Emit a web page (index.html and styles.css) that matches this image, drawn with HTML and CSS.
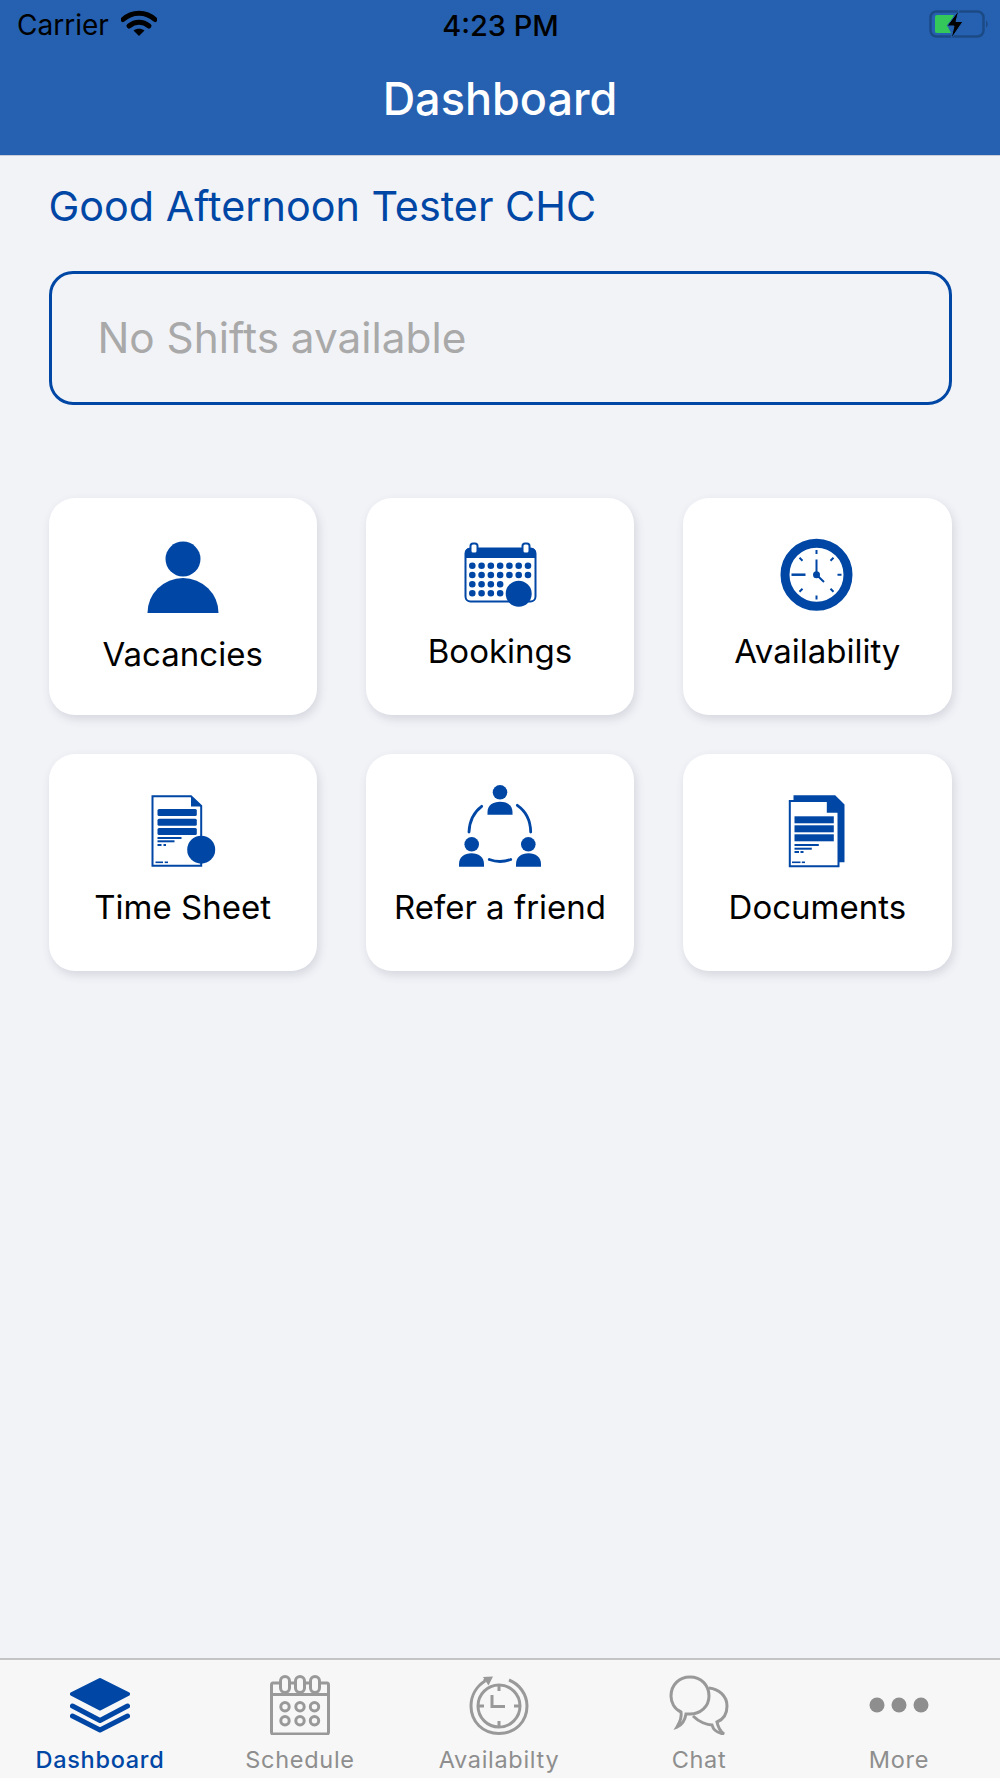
FILE: index.html
```html
<!DOCTYPE html>
<html lang="en">
<head>
  <meta charset="UTF-8" />
  <meta name="viewport" content="width=device-width, initial-scale=1.0"/>
  <title>Dashboard</title>
  <link rel="stylesheet" href="styles.css">
</head>
<body>
  <header class="topbar">
    <div class="status">
      <div class="status-left">
        <span class="carrier">Carrier</span>
        <svg class="wifi" width="36" height="28" viewBox="0 0 36 28">
          <path d="M2 10.500C11 2 25 2 34 10.500" fill="none" stroke="#000" stroke-width="5" stroke-linecap="round"/>
          <path d="M8 17C14 12 22 12 28 17" fill="none" stroke="#000" stroke-width="5" stroke-linecap="round"/>
          <path d="M12.500 21.500C15.500 19 20.500 19 23.500 21.500L18 27Z"/>
        </svg>
      </div>
      <span class="time">4:23 PM</span>
      <div class="status-right">
        <svg width="60" height="30" viewBox="0 0 60 30">
          <rect x="1.500" y="2.500" width="53" height="25" rx="6" fill="none" stroke="#1c4a85" stroke-width="2.500"/>
          <path d="M57 11.500C59 12.500 59.500 17.500 57 18.500Z" fill="#1c4a85"/>
          <path d="M6 8C6 7 6.500 6 8 6H25L19 18L22 24H8C6.500 24 6 23 6 22Z" fill="#34c759"/>
          <path d="M30 1L18 17H25L22 30L34 12.500H27Z" stroke="#2561b0" stroke-width="1"/>
        </svg>
      </div>
    </div>
    <h1 class="title">Dashboard</h1>
  </header>

  <main class="content">
    <p class="greeting">Good Afternoon Tester CHC</p>
    <div class="shifts">No Shifts available</div>

    <div class="grid">
      <div class="card">
        <svg class="card-icon" width="90" height="88" viewBox="0 0 90 88">
          <circle cx="45" cy="31" r="17.500"/>
          <path d="M9.500 85A35.500 35 0 0 1 80.500 85Z"/>
        </svg>
        <span class="card-label card-label-low">Vacancies</span>
      </div>

      <div class="card">
        <svg class="card-icon" width="90" height="88" viewBox="0 0 90 88">
          <rect x="10.500" y="20.500" width="70" height="53" rx="5" fill="#fff" stroke="#0047a5" stroke-width="2"/>
          <path d="M10 30V25C10 22 12 20 15 20H76C79 20 81 22 81 25V30Z"/>
          <rect x="15.500" y="15.500" width="7" height="10" rx="2.500" fill="#fff" stroke="#0047a5" stroke-width="2"/>
          <rect x="67.500" y="15.500" width="7" height="10" rx="2.500" fill="#fff" stroke="#0047a5" stroke-width="2"/>
          <g fill="none" stroke="#0047a5" stroke-width="6.600" stroke-linecap="round" stroke-dasharray="0 9.280">
            <path d="M17.300 37.700H74"/>
            <path d="M17.300 47H74"/>
            <path d="M17.300 56.300H46"/>
            <path d="M17.300 65.300H46"/>
          </g>
          <circle cx="63.700" cy="65.700" r="13"/>
        </svg>
        <span class="card-label">Bookings</span>
      </div>

      <div class="card">
        <svg class="card-icon" width="90" height="88" viewBox="0 0 90 88">
          <circle cx="44.500" cy="46.700" r="31.500" fill="#fff" stroke="#0047a5" stroke-width="9"/>
          <g fill="none" stroke="#0047a5" stroke-width="2">
            <path d="M44.500 22V26M44.500 67.500V71.500M65.500 46.700H69.500"/>
            <path d="M19.500 46.700H33.500" stroke-width="2.500"/>
            <path d="M27.500 29.700L30.500 32.700M61.500 29.700L58.500 32.700M27.500 63.700L30.500 60.700M61.500 63.700L58.500 60.700"/>
            <path d="M44.500 46.700V31.500M44.500 46.700L52 54"/>
          </g>
          <circle cx="44.500" cy="46.700" r="3.500"/>
        </svg>
        <span class="card-label">Availability</span>
      </div>

      <div class="card">
        <svg class="card-icon" width="90" height="88" viewBox="0 0 90 88">
          <path d="M14.500 12.300H53L63.200 22V81.700H14.500Z" fill="#fff" stroke="#0047a5" stroke-width="2"/>
          <path d="M53 12.300L64.200 22.500H53Z"/>
          <rect x="19.500" y="25" width="39.300" height="7" rx="1.500"/>
          <rect x="19.500" y="34.700" width="39.300" height="7" rx="1.500"/>
          <rect x="19.500" y="44" width="39.300" height="7" rx="1.500"/>
          <rect x="19.500" y="53" width="24" height="2"/>
          <rect x="19.500" y="56.300" width="17" height="2"/>
          <rect x="19.500" y="60" width="4" height="2"/>
          <rect x="25.500" y="60" width="2.500" height="2"/>
          <rect x="17.500" y="77.500" width="7.500" height="1.600"/>
          <rect x="26.700" y="77.500" width="3.300" height="1.600"/>
          <circle cx="63.200" cy="65.700" r="14"/>
        </svg>
        <span class="card-label">Time Sheet</span>
      </div>

      <div class="card">
        <svg class="card-icon" width="90" height="88" viewBox="0 0 90 88">
          <circle cx="45" cy="8.300" r="7.300"/>
          <path d="M32.500 30.700V28C32.500 21 38 17.700 45 17.700S57.500 21 57.500 28V30.700Z"/>
          <circle cx="16.700" cy="60.300" r="7.300"/>
          <path d="M4 82.700V80C4 73 9.500 69.300 16.500 69.300S29 73 29 80V82.700Z"/>
          <circle cx="73.300" cy="60.300" r="7.300"/>
          <path d="M61 82.700V80C61 73 66.500 69.300 73.500 69.300S86 73 86 80V82.700Z"/>
          <g fill="none" stroke="#0047a5" stroke-width="2.800" stroke-linecap="round">
            <path d="M26.700 22.300C19 28 14.500 37 14 48"/>
            <path d="M62.300 21.300C70.500 27 75.500 37 75.700 48"/>
            <path d="M34.300 75.500C41 78 49 78 55.700 75.500"/>
          </g>
        </svg>
        <span class="card-label">Refer a friend</span>
      </div>

      <div class="card">
        <svg class="card-icon" width="90" height="88" viewBox="0 0 90 88">
          <path d="M21.500 11.300H63.200L72.500 20.500V78.300H21.500Z"/>
          <path d="M17.800 17H55.800L66.500 27.700V82.300H17.800Z" fill="#fff" stroke="#0047a5" stroke-width="2"/>
          <path d="M54.800 16H60L67.500 23V28.700H54.800Z"/>
          <rect x="22.500" y="32.300" width="39.300" height="7"/>
          <rect x="22.500" y="41.300" width="39.300" height="7"/>
          <rect x="22.500" y="50.300" width="39.300" height="7"/>
          <rect x="22.500" y="60" width="24.300" height="2"/>
          <rect x="22.500" y="63.700" width="17.300" height="2"/>
          <rect x="22.500" y="67" width="4.500" height="2"/>
          <rect x="28.500" y="67" width="3" height="2"/>
          <rect x="20" y="77.500" width="8.500" height="1.600"/>
          <rect x="29.800" y="77.500" width="3.200" height="1.600"/>
        </svg>
        <span class="card-label">Documents</span>
      </div>
    </div>
  </main>

  <nav class="tabbar">
    <div class="tab tab-active">
      <svg width="60" height="60" viewBox="0 0 60 60">
        <path d="M30 5L58 19L30 33.500L2 19Z" fill="#0047a5" stroke="#0047a5" stroke-width="4" stroke-linejoin="round"/>
        <path d="M2.500 31L30 45.500L57.500 31" fill="none" stroke="#0047a5" stroke-width="5" stroke-linecap="round" stroke-linejoin="round"/>
        <path d="M2.500 41L30 55L57.500 41" fill="none" stroke="#0047a5" stroke-width="5" stroke-linecap="round" stroke-linejoin="round"/>
      </svg>
      <span>Dashboard</span>
    </div>

    <div class="tab">
      <svg width="60" height="60" viewBox="0 0 60 60" fill="none" stroke="#999" stroke-width="3">
        <path d="M10 8H3C2 8 1.500 9 1.500 10V57C1.500 58.500 2 59 3 59H57C58 59 58.500 58.500 58.500 57V10C58.500 9 58 8 57 8H50"/>
        <path d="M1.500 19.500H58.500"/>
        <path d="M20 8H25M35 8H40"/>
        <rect x="10.500" y="1.500" width="9" height="16" rx="4.500"/>
        <rect x="25.500" y="1.500" width="9" height="16" rx="4.500"/>
        <rect x="40.500" y="1.500" width="9" height="16" rx="4.500"/>
        <circle cx="15" cy="31.700" r="4.200"/>
        <circle cx="30" cy="31.700" r="4.200"/>
        <circle cx="44.500" cy="31.700" r="4.200"/>
        <circle cx="15" cy="45.700" r="4.200"/>
        <circle cx="30" cy="45.700" r="4.200"/>
        <circle cx="44.500" cy="45.700" r="4.200"/>
      </svg>
      <span>Schedule</span>
    </div>

    <div class="tab tab-shift">
      <svg width="60" height="60" viewBox="0 0 60 60" fill="none" stroke="#999" stroke-width="3">
        <path d="M40 5C50 9 58 19 58 31C58 47 46 58.500 30 58.500S2 47 2 31C2 20 8 11 16 6"/>
        <path d="M15 6L19 3" stroke-width="3"/>
        <path d="M14 2L24 1.500L19.500 10.500Z" fill="#999" stroke="none"/>
        <circle cx="30" cy="31" r="21"/>
        <path d="M30 10V16M30 46V52M9 31H15M45 31H51"/>
        <path d="M23 20V31.500H36" stroke-width="3"/>
      </svg>
      <span>Availabilty</span>
    </div>

    <div class="tab tab-shift">
      <svg width="60" height="60" viewBox="0 0 60 60" fill="none" stroke="#999" stroke-width="3">
        <path d="M12 37C5 34 2 27 2 21C2 10 10 2 21 2S40 10 40 21S31 39 21 39C19 39 18 39 17 39C16 45 13 50 8 52C11 47 13 42 12 37Z"/>
        <path d="M40 13C50 14 58 21 58 31C58 40 53 45 48 47C49 52 51 56 55 59C48 58 44 54 43 50C38 50 30 47 24 41"/>
      </svg>
      <span>Chat</span>
    </div>

    <div class="tab tab-shift">
      <svg width="60" height="60" viewBox="0 0 60 60" fill="#8e8e8e">
        <circle cx="8" cy="30" r="7.500"/>
        <circle cx="30" cy="30" r="7.500"/>
        <circle cx="52" cy="30" r="7.500"/>
      </svg>
      <span>More</span>
    </div>
  </nav>
</body>
</html>
```

FILE: styles.css
```css
body {
  margin: 0;
  height: 100vh;
  display: flex;
  flex-direction: column;
  font-family: Inter, 'Noto Sans', sans-serif;
  background: #f2f3f7;
  overflow: hidden;
}

svg {
  display: block;
}

.topbar {
  height: 155px;
  flex-shrink: 0;
  background: #2561b0;
  border-bottom: 1px solid #c9ced8;
}

.status {
  height: 50px;
  padding: 0 11px 0 17px;
  display: grid;
  grid-template-columns: 1fr auto 1fr;
  align-items: center;
  color: #000;
  font-size: 28px;
}

.status-left {
  display: flex;
  align-items: center;
  gap: 12px;
}

.status-left .wifi {
  fill: #000;
  margin-top: -4px;
}

.status-right {
  display: flex;
  justify-content: flex-end;
}

.status-right svg {
  fill: #000;
  margin-top: -2px;
}

.time {
  margin-right: 5px;
  font-size: 29px;
  font-weight: 500;
}

.title {
  margin: 0;
  height: 96px;
  line-height: 98px;
  text-align: center;
  color: #fff;
  font-size: 45px;
  font-weight: 500;
}

.content {
  flex: 1;
  padding: 0 48.5px;
}

.greeting {
  margin: 0;
  padding-top: 26px;
  line-height: 48px;
  color: #0047a5;
  font-size: 41.3px;
}

.shifts {
  margin-top: 41px;
  height: 128px;
  line-height: 128px;
  padding-left: 46px;
  border: 3px solid #0047a5;
  border-radius: 24px;
  color: #a9a9a9;
  font-size: 42.3px;
}

.grid {
  margin-top: 93px;
  display: grid;
  grid-template-columns: repeat(3, 1fr);
  gap: 39px 49px;
}

.card {
  height: 217px;
  padding-top: 30px;
  box-sizing: border-box;
  background: #fff;
  border-radius: 26px;
  box-shadow: 2px 4px 10px rgba(60, 70, 100, 0.16);
  display: flex;
  flex-direction: column;
  align-items: center;
}

.card-icon {
  fill: #0047a5;
}

.card-label {
  margin-top: 17px;
  line-height: 36px;
  color: #000;
  font-size: 33px;
}

.card-label-low {
  margin-top: 20px;
}

.tabbar {
  height: 120px;
  flex-shrink: 0;
  box-sizing: border-box;
  border-top: 2px solid #c4c4c4;
  background: #f7f7f7;
  padding-top: 15px;
  display: grid;
  grid-template-columns: repeat(5, 1fr);
}

.tab {
  display: flex;
  flex-direction: column;
  align-items: center;
  color: #8e8e8e;
  font-size: 23.5px;
  letter-spacing: 0.7px;
}

.tab-shift {
  margin-right: 2px;
}

.tab span {
  margin-top: 10px;
  line-height: 30px;
}

.tab-active {
  color: #0047a5;
  font-weight: 500;
}
```
